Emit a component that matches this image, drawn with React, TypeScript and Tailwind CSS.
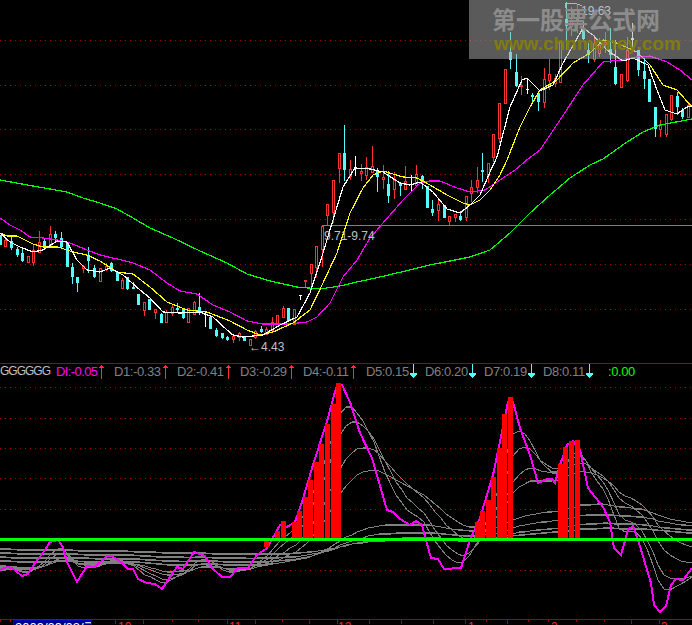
type Raw = [number, number, number, number, number, string];
type Pt = [number, number];

const map = (ox: number, oy: number, list: Raw[]) =>
  list.map(([x, bt, bb, wt, wb, c]) => ({
    x: Math.round(ox + x / 3),
    bt: Math.round(oy + bt / 3),
    bb: Math.round(oy + bb / 3),
    wt: Math.round(oy + wt / 3),
    wb: Math.round(oy + wb / 3),
    c,
  }));

const candles = [
  ...map(0, 170, [
    [0, 195, 225, 195, 225, "c"], [15, 210, 227, 208, 228, "r"], [33, 213, 235, 200, 240, "c"], [50, 237, 255, 230, 262, "c"],
    [67, 248, 272, 235, 275, "c"], [83, 258, 275, 258, 275, "r"], [100, 240, 275, 225, 288, "r"], [118, 216, 245, 183, 245, "r"],
    [133, 212, 227, 205, 240, "c"], [151, 192, 225, 168, 225, "r"], [166, 192, 205, 183, 215, "c"], [184, 205, 232, 186, 235, "c"],
    [200, 218, 290, 218, 290, "c"], [217, 292, 320, 280, 342, "c"], [232, 321, 339, 320, 365, "c"], [250, 287, 293, 285, 308, "r"],
    [265, 258, 272, 232, 308, "c"], [283, 295, 320, 285, 323, "c"], [300, 295, 333, 295, 335, "r"], [318, 288, 296, 280, 303, "r"],
    [334, 280, 303, 277, 305, "c"], [350, 305, 332, 305, 332, "c"], [367, 330, 353, 325, 353, "r"], [382, 322, 357, 320, 360, "c"],
    [400, 350, 356, 335, 356, "c"], [415, 372, 404, 372, 404, "c"], [433, 397, 420, 397, 437, "r"], [448, 388, 420, 388, 420, "c"],
    [466, 418, 425, 418, 447, "r"], [484, 432, 458, 428, 458, "c"], [499, 425, 456, 420, 458, "r"], [517, 410, 428, 405, 437, "r"],
    [532, 413, 420, 398, 425, "c"], [550, 418, 445, 415, 447, "c"], [565, 415, 457, 413, 458, "r"], [583, 395, 431, 393, 433, "r"],
    [598, 411, 430, 370, 435, "c"], [615, 432, 436, 423, 470, "w"], [631, 442, 476, 442, 476, "c"], [649, 479, 498, 475, 500, "c"],
    [666, 490, 505, 488, 507, "c"], [682, 500, 510, 497, 512, "c"],
  ] as Raw[]),
  ...map(230, 120, [
    [10, 648, 658, 648, 670, "r"], [27, 638, 650, 635, 662, "r"], [43, 648, 662, 648, 662, "c"], [59, 657, 675, 657, 675, "r"],
    [76, 632, 650, 630, 658, "r"], [92, 628, 636, 618, 640, "c"], [109, 626, 642, 622, 645, "r"], [125, 607, 630, 592, 632, "r"],
    [142, 586, 608, 586, 608, "r"], [160, 565, 592, 558, 592, "r"], [175, 565, 604, 565, 604, "c"], [193, 568, 612, 568, 612, "r"],
    [209, 525, 527, 525, 540, "w"], [226, 480, 482, 480, 505, "r"], [242, 433, 460, 433, 500, "r"], [259, 379, 440, 379, 470, "r"],
    [275, 318, 388, 318, 440, "r"], [292, 253, 285, 253, 316, "r"], [310, 181, 275, 181, 310, "r"], [326, 100, 143, 100, 190, "r"],
    [343, 100, 150, 15, 182, "c"], [359, 148, 168, 120, 180, "r"], [376, 140, 143, 108, 168, "w"], [392, 153, 158, 132, 182, "r"],
    [409, 142, 165, 112, 180, "r"], [425, 139, 155, 78, 158, "r"], [442, 150, 172, 143, 215, "c"], [458, 172, 177, 135, 208, "r"],
    [475, 192, 228, 152, 248, "c"], [493, 180, 207, 157, 238, "r"], [509, 188, 197, 185, 228, "c"], [526, 183, 207, 138, 208, "r"],
    [542, 193, 196, 165, 215, "w"], [559, 163, 195, 135, 195, "r"], [575, 168, 188, 165, 208, "c"], [592, 197, 263, 197, 263, "c"],
    [607, 268, 278, 240, 288, "c"], [625, 252, 270, 233, 303, "r"], [641, 255, 295, 255, 295, "c"], [658, 287, 304, 287, 316, "r"],
    [675, 282, 290, 282, 306, "r"], [691, 288, 300, 273, 303, "c"], [709, 228, 290, 228, 302, "r"],
  ] as Raw[]),
  ...map(464, 80, [
    [22, 322, 340, 300, 365, "r"], [40, 300, 322, 262, 340, "r"], [55, 270, 275, 220, 305, "c"], [72, 250, 285, 250, 310, "r"],
    [88, 163, 230, 163, 245, "r"], [106, 70, 175, 70, 190, "r"],
  ] as Raw[]),
  ...map(460, 0, [
    [134, 208, 310, 208, 310, "r"], [151, 155, 180, 95, 207, "c"], [168, 215, 258, 162, 260, "c"], [184, 255, 258, 228, 285, "r"],
    [201, 266, 270, 235, 282, "w"], [217, 284, 290, 280, 305, "c"], [235, 280, 305, 280, 332, "c"], [251, 238, 305, 205, 325, "r"],
    [268, 222, 240, 178, 270, "r"], [284, 235, 248, 222, 260, "r"], [300, 125, 245, 125, 245, "r"], [317, 58, 78, 5, 150, "c"],
    [334, 62, 78, 22, 108, "r"], [351, 50, 58, 15, 100, "r"], [368, 88, 118, 62, 120, "c"], [385, 150, 165, 128, 190, "c"],
    [401, 128, 178, 105, 185, "r"], [418, 135, 160, 115, 170, "r"], [434, 125, 132, 95, 160, "r"], [451, 148, 165, 85, 190, "c"],
    [466, 202, 252, 120, 255, "c"], [484, 222, 262, 222, 262, "r"], [500, 150, 240, 110, 245, "r"], [517, 115, 120, 70, 150, "w"],
    [535, 150, 210, 142, 228, "c"], [551, 212, 237, 175, 268, "c"], [568, 237, 305, 237, 305, "c"], [584, 322, 386, 322, 410, "c"],
    [601, 372, 386, 360, 412, "r"], [617, 342, 402, 342, 412, "r"], [634, 285, 356, 285, 362, "r"], [650, 288, 320, 275, 345, "c"],
    [667, 330, 350, 325, 357, "c"], [684, 315, 350, 312, 352, "r"],
  ] as Raw[]),
];

const pts = (p: Pt[]) => p.map(([x, y]) => `${x},${y}`).join(" ");

const green: Pt[] = [[0,180],[33,186],[67,192],[83,198],[100,203],[117,209],[133,218],[150,228],[173,238],[200,251],[227,263],[247,274],[270,281],[297,287],[320,289],[340,286],[357,282],[380,277],[397,273],[430,265],[470,257],[490,250],[510,233],[530,213],[550,195],[570,178],[590,165],[603,159],[627,142],[643,132],[660,125],[692,119]];
const magenta: Pt[] = [[0,218],[10,225],[20,230],[30,237],[43,238],[57,240],[70,243],[87,250],[100,255],[117,259],[133,263],[150,270],[167,283],[180,291],[197,294],[213,305],[230,312],[247,321],[263,324],[290,324],[307,322],[317,317],[330,303],[343,277],[357,260],[370,238],[383,223],[403,200],[420,183],[430,181],[440,181],[457,188],[470,192],[485,190],[500,180],[515,170],[528,159],[540,150],[560,120],[583,85],[603,62],[620,60],[637,57],[650,56],[667,62],[680,70],[692,80]];
const yellow: Pt[] = [[0,233],[7,236],[17,236],[33,244],[43,247],[58,247],[73,252],[87,255],[100,261],[117,272],[133,274],[150,287],[167,302],[187,310],[207,312],[230,321],[247,330],[260,335],[273,332],[293,323],[310,310],[323,283],[337,253],[350,213],[363,188],[373,175],[383,171],[403,177],[417,178],[430,185],[447,195],[463,203],[470,205],[480,200],[490,190],[500,175],[507,160],[520,127],[530,107],[540,90],[557,80],[573,63],[590,53],[603,40],[617,43],[637,52],[650,65],[663,85],[677,90],[692,107]];
const white: Pt[] = [[0,233],[10,242],[20,247],[33,252],[43,250],[57,241],[67,242],[77,260],[87,270],[100,272],[110,268],[123,275],[140,290],[150,298],[163,312],[180,313],[200,312],[213,317],[227,330],[233,335],[243,337],[263,335],[280,325],[297,317],[310,293],[323,253],[333,220],[343,187],[355,168],[370,169],[383,172],[400,183],[410,185],[420,182],[433,192],[447,209],[460,213],[470,205],[480,195],[490,172],[497,157],[510,107],[522,80],[527,78],[540,91],[553,85],[563,63],[583,28],[593,35],[607,50],[623,61],[633,58],[648,65],[657,90],[665,110],[677,114],[687,107],[692,106]];

const di: Pt[] = [[0,570],[7,567],[12,568],[22,576],[28,574],[35,563],[43,553],[50,542],[58,540],[63,547],[67,562],[77,582],[87,566],[95,567],[107,556],[112,556],[122,563],[128,569],[133,569],[138,579],[147,583],[155,584],[162,589],[170,577],[177,567],[183,569],[194,552],[205,556],[212,568],[222,577],[230,577],[238,568],[248,568],[257,555],[267,548],[270,543],[280,525],[287,527],[295,522],[302,502],[313,465],[328,418],[336,388],[342,385],[350,402],[360,433],[372,458],[387,510],[393,512],[400,519],[410,525],[416,521],[422,525],[426,540],[431,558],[438,559],[444,569],[461,568],[470,540],[480,518],[493,475],[502,432],[508,402],[513,402],[520,428],[530,455],[538,483],[547,479],[552,479],[555,483],[560,465],[567,445],[573,441],[580,450],[588,488],[603,507],[610,522],[614,548],[621,555],[628,530],[633,526],[639,543],[651,583],[654,605],[660,612],[666,606],[671,585],[676,579],[683,580],[692,568]];

const at = (x: number) => {
  for (let i = 1; i < di.length; i++) {
    if (x <= di[i][0]) {
      const [x0, y0] = di[i - 1];
      const [x1, y1] = di[i];
      return y0 + ((y1 - y0) * (x - x0)) / (x1 - x0);
    }
  }
  return di[di.length - 1][1];
};

const ema = (period: number, seed: number): Pt[] => {
  const out: Pt[] = [];
  let v = seed;
  const a = 2 / (period + 1);
  for (let x = 0; x <= 692; x += 5.58) {
    v = v + a * (at(x) - v);
    out.push([Math.round(x), Math.round(v)]);
  }
  return out;
};

const grays = [ema(5, 572), ema(8, 570), ema(15, 568), ema(24, 566), ema(90, 561), ema(130, 557), ema(190, 553), ema(260, 549)];

const bars: [number, number, number, number][] = [
  [275,280,531,539],[281,286,521,539],[292,297,522,539],[297,302,511,539],[303,308,497,539],[308,313,480,539],[314,319,462,539],[319,324,444,539],[325,330,424,539],[331,336,404,539],[336,341,383,539],
  [475,480,522,539],[480,485,511,539],[486,491,500,539],[491,496,477,539],[497,502,448,539],[502,507,414,539],[508,513,397,539],
  [558,563,464,539],[563,568,447,539],[569,574,441,539],[575,580,440,539],
  [264,269,539,547],[48,53,539,541],
];

const ticks = [0,10,115,143,172,198,227,255,282,309,337,369,401,433,465,486,507,528,548,576,604,631,659];

function UpArrow() {
  return (
    <svg width="7" height="15" viewBox="0 0 7 15" className="shrink-0" shapeRendering="crispEdges">
      <path d="M3 1h1v14h-1zM2 2h3v1h-3zM1 3h5v1h-5z" fill="#ff3232" />
    </svg>
  );
}

function DownArrow() {
  return (
    <svg width="7" height="15" viewBox="0 0 7 15" className="shrink-0" shapeRendering="crispEdges">
      <path d="M3 0h1v14h-1zM0 9h7v2h-7zM1 11h5v1h-5zM2 12h3v1h-3z" fill="#54fcfc" />
    </svg>
  );
}

function Reading({ label, up, width, color }: { label: string; up: boolean; width: string; color: string }) {
  return (
    <div className={`flex items-start gap-[1px] shrink-0 ${width} ${color}`}>
      <span>{label}</span>
      {up ? <UpArrow /> : <DownArrow />}
    </div>
  );
}

export default function App() {
  return (
    <div className="w-[692px] h-[625px] bg-black flex flex-col overflow-hidden font-['Liberation_Sans',sans-serif]">
      <div className="relative h-[364px] shrink-0 border-b border-[#a80000]">
        <svg width="692" height="363" viewBox="0 0 692 363" className="block" shapeRendering="crispEdges">
          {[40, 85, 129, 174, 219, 264, 309].map((y) => (
            <line key={y} x1="0" x2="692" y1={y + 0.5} y2={y + 0.5} stroke="#a00000" strokeDasharray="1 4" />
          ))}
          <line x1="322" x2="692" y1="225.5" y2="225.5" stroke="#808080" />
          <polyline points="565,8 565,3 575,3 582,6" fill="none" stroke="#c0c0c0" />
          {candles.map((k, i) => {
            const col = k.c === "r" ? "#ff3232" : k.c === "c" ? "#54fcfc" : "#ffffff";
            return (
              <g key={i}>
                <line x1={k.x + 0.5} x2={k.x + 0.5} y1={k.wt} y2={k.wb} stroke={col} />
                {k.c === "r" ? (
                  <rect x={k.x - 0.5} y={k.bt + 0.5} width="2" height={Math.max(k.bb - k.bt, 1)} fill="#000" stroke={col} />
                ) : (
                  <rect x={k.x - 1} y={k.bt} width="3" height={Math.max(k.bb - k.bt, 1)} fill={col} />
                )}
              </g>
            );
          })}
          <polyline points={pts(green)} fill="none" stroke="#00ff00" strokeWidth="1.2" />
          <polyline points={pts(magenta)} fill="none" stroke="#ff00ff" strokeWidth="1.2" />
          <polyline points={pts(yellow)} fill="none" stroke="#ffff00" strokeWidth="1.2" />
          <polyline points={pts(white)} fill="none" stroke="#ffffff" strokeWidth="1.2" />
        </svg>
        <span className="absolute left-[249px] top-[340px] text-[12px] leading-[14px] text-[#c0c0c0]">←4.43</span>
        <span className="absolute left-[324px] top-[229px] text-[12px] leading-[14px] text-[#c0c0c0]">9.71-9.74</span>
        <span className="absolute left-[581px] top-[4px] text-[12px] leading-[14px] text-[#d8d8d8]">19.63</span>
        <div className="absolute left-[469px] top-0 w-[223px] h-[59px] bg-[#aaaaaa]/[0.53]">
          <div className="absolute left-[23px] top-[4px] text-[24px] leading-[30px] font-bold text-[#8c8c8c] font-['Noto_Sans_CJK_SC',sans-serif] whitespace-nowrap">
            第一股票公式网
          </div>
          <div className="absolute left-[25px] top-[33px] text-[19px] leading-[22px] font-bold text-[#807c10] whitespace-nowrap">
            www.chnmoney.com
          </div>
        </div>
      </div>

      <div className="h-4 shrink-0 flex text-[13px] leading-[15px] tracking-[-0.4px] text-[#808080]">
        <div className="w-[56px] shrink-0 text-[12px] tracking-[-1px] text-[#c0c0c0] overflow-hidden whitespace-nowrap">GGGGGG</div>
        <Reading label="DI:-0.05" up width="w-[58px] tracking-[-0.6px]" color="text-[#ff00ff]" />
        <Reading label="D1:-0.33" up width="w-[63px]" color="" />
        <Reading label="D2:-0.41" up width="w-[63px]" color="" />
        <Reading label="D3:-0.29" up width="w-[63px]" color="" />
        <Reading label="D4:-0.11" up width="w-[63px]" color="" />
        <Reading label="D5:0.15" up={false} width="w-[59px]" color="" />
        <Reading label="D6:0.20" up={false} width="w-[59px]" color="" />
        <Reading label="D7:0.19" up={false} width="w-[59px]" color="" />
        <Reading label="D8:0.11" up={false} width="w-[65px]" color="" />
        <div className="text-[#00ff00]">:0.00</div>
      </div>

      <div className="relative h-[239px] shrink-0">
        <svg width="692" height="239" viewBox="0 380 692 239" className="block" shapeRendering="crispEdges">
          {[387, 418, 448, 478, 509, 570].map((y) => (
            <line key={y} x1="0" x2="692" y1={y + 0.5} y2={y + 0.5} stroke="#a00000" strokeDasharray="1 4" />
          ))}
          {grays.map((g, i) => (
            <polyline key={i} points={pts(g)} fill="none" stroke="#808080" strokeWidth="1.1" />
          ))}
          <polyline points={pts(di)} fill="none" stroke="#ff00ff" strokeWidth="2" />
          {bars.map(([a, b, t, d], i) => (
            <rect key={i} x={a} y={t} width={b - a} height={d - t} fill="#ff0000" />
          ))}
          <rect x="0" y="538" width="692" height="3" fill="#00ff00" />
        </svg>
      </div>

      <div className="relative h-[6px] shrink-0 border-t border-[#a80000] overflow-hidden">
        <svg width="692" height="5" className="block" shapeRendering="crispEdges">
          {ticks.map((x) => (
            <line key={x} x1={x + 0.5} x2={x + 0.5} y1="0" y2={x % 2 ? 4 : 2} stroke="#a80000" />
          ))}
          {[[118, "10"], [229, "11"], [338, "12"], [468, "1"], [551, "2"], [661, "3"]].map(([x, t]) => (
            <text key={String(x)} x={x as number} y="11" fontSize="12" fill="#e03030" fontFamily="Liberation Sans">
              {t}
            </text>
          ))}
        </svg>
        <div className="absolute left-[13px] top-0 w-[79px] h-[8px] bg-[#000080] border border-[#0000c0] text-white text-[13px] leading-[14px] pl-[1px] whitespace-nowrap overflow-hidden">
          2009/09/03/三
        </div>
      </div>
    </div>
  );
}
